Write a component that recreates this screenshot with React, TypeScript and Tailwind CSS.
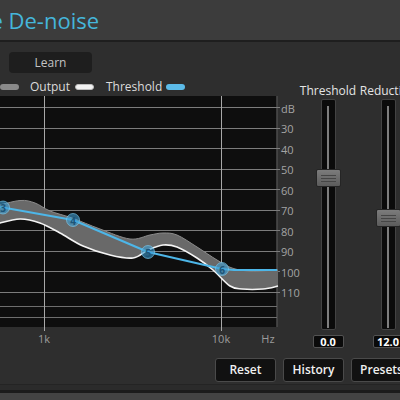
import React from "react";

type Pt = [number, number];

// catmull-rom -> cubic bezier segments
function curve(pts: Pt[], move = true) {
  let d = move ? `M${pts[0][0]},${pts[0][1]}` : `L${pts[0][0]},${pts[0][1]}`;
  for (let i = 0; i < pts.length - 1; i++) {
    const p0 = pts[i - 1] || pts[i];
    const p1 = pts[i];
    const p2 = pts[i + 1];
    const p3 = pts[i + 2] || p2;
    const c1: Pt = [p1[0] + (p2[0] - p0[0]) / 6, p1[1] + (p2[1] - p0[1]) / 6];
    const c2: Pt = [p2[0] - (p3[0] - p1[0]) / 6, p2[1] - (p3[1] - p1[1]) / 6];
    d += ` C${c1[0]},${c1[1]} ${c2[0]},${c2[1]} ${p2[0]},${p2[1]}`;
  }
  return d;
}

const upper: Pt[] = [[-4, 206], [20, 200.5], [35, 203], [50, 211], [72, 218], [100, 229], [130, 239], [150, 235], [163, 233], [177, 235], [197, 247], [217, 260], [232, 268], [250, 271], [278, 270]];
const lower: Pt[] = [[-4, 224], [20, 219], [40, 223], [60, 233], [83, 246], [110, 255], [133, 258], [148, 250], [163, 245], [177, 247], [197, 258], [213, 270], [230, 286], [242, 289], [263, 289], [278, 286]];

const dbLines = [
  { y: 107, label: "dB" },
  { y: 127.5, label: "30" },
  { y: 148, label: "40" },
  { y: 168.5, label: "50" },
  { y: 189, label: "60" },
  { y: 209.5, label: "70" },
  { y: 230, label: "80" },
  { y: 250.5, label: "90" },
  { y: 271, label: "100" },
  { y: 291.5, label: "110" },
];

const nodes = [
  { n: "3", x: 3, y: 207.5 },
  { n: "4", x: 73, y: 220 },
  { n: "5", x: 148, y: 252 },
  { n: "6", x: 222, y: 269 },
];

function Chart() {
  const font = "'Open Sans', sans-serif";
  return (
    <svg width={300} height={252} viewBox="0 96 300 252" className="block">
      <rect x={-2} y={96} width={278.5} height={231} fill="#0e0e0e" />
      <line x1={277} y1={96} x2={277} y2={327} stroke="#5a5a5a" />
      {dbLines.map((l) => (
        <g key={l.label}>
          <line x1={0} y1={Math.round(l.y) + 0.5} x2={280} y2={Math.round(l.y) + 0.5} stroke="#7c7c7c" />
          <text x={281} y={l.y + 1} fontSize={11} fill="#a4a4a4" dominantBaseline="central" fontFamily={font}>
            {l.label}
          </text>
        </g>
      ))}
      <line x1={0} y1={306.5} x2={277} y2={306.5} stroke="#6e6e6e" />
      <line x1={0} y1={317.5} x2={277} y2={317.5} stroke="#6e6e6e" />
      <line x1={44.5} y1={94} x2={44.5} y2={331} stroke="#a8a8a8" />
      <line x1={221.5} y1={94} x2={221.5} y2={331} stroke="#a8a8a8" />

      <path d={curve(upper) + " " + curve([...lower].reverse(), false) + " Z"} fill="#696969" />
      <path d={curve(upper)} fill="none" stroke="#8c8c8c" strokeWidth={1} />
      <path d={curve(lower)} fill="none" stroke="#f4f4f4" strokeWidth={1.6} />

      <polyline
        points="-2,207 3,207.5 73,220 148,252 222,269 234,270 277,270"
        fill="none"
        stroke="#4db6e8"
        strokeWidth={2}
        strokeLinejoin="round"
      />
      {nodes.map((p) => (
        <g key={p.n}>
          <circle cx={p.x} cy={p.y} r={6.5} fill="#3d9fd4" fillOpacity={0.6} stroke="#7fd0f5" strokeOpacity={0.6} />
          <text x={p.x} y={p.y + 0.5} fontSize={10} fontWeight={700} fill="#1c5578" textAnchor="middle" dominantBaseline="central" fontFamily={font}>
            {p.n}
          </text>
        </g>
      ))}

      <text x={44} y={338} fontSize={11} fill="#9c9c9c" textAnchor="middle" dominantBaseline="central" fontFamily={font}>1k</text>
      <text x={221} y={338} fontSize={11} fill="#9c9c9c" textAnchor="middle" dominantBaseline="central" fontFamily={font}>10k</text>
      <text x={268} y={338} fontSize={11} fill="#9c9c9c" textAnchor="middle" dominantBaseline="central" fontFamily={font}>Hz</text>
    </svg>
  );
}

function Slider({ label, value, thumbTop }: { label: string; value: string; thumbTop: number }) {
  return (
    <div className="flex flex-col items-center w-[56px]">
      <div className="h-[14px] text-[12px] leading-[14px] text-[#e4e4e4] whitespace-nowrap">{label}</div>
      <div className="relative mt-[1px] h-[231px] w-[15px] rounded-[2px] border border-[#434343] bg-[#0b0b0b]">
        <div className="mx-auto mt-[6px] h-[222px] w-[2px] bg-[#7e7e7e]" />
        <div
          className="absolute left-[-6px] w-[25px] h-[18px] rounded-[2px] border border-[#252525] bg-gradient-to-b from-[#7c7c7c] to-[#5c5c5c] flex flex-col justify-center gap-[2px] px-[4px]"
          style={{ top: thumbTop }}
        >
          <div className="h-px bg-[#454545]" />
          <div className="h-px bg-[#454545]" />
          <div className="h-px bg-[#454545]" />
        </div>
      </div>
      <div className="mt-[5px] h-[13px] w-[31px] rounded-[2px] border border-[#525252] bg-[#0a0a0a] text-center text-[11px] leading-[11px] font-bold text-white">
        {value}
      </div>
    </div>
  );
}

export default function App() {
  return (
    <div className="w-[400px] h-[400px] overflow-hidden bg-[#2e2e2e] flex flex-col font-['Open_Sans',sans-serif]">
      <div className="h-[40px] shrink-0 bg-[#3c3c3c] pt-[5px] whitespace-nowrap">
        <span className="ml-[-52px] text-[22px] leading-[30px] text-[#45b6db]">Voice De-noise</span>
      </div>
      <div className="h-[2px] shrink-0 bg-[#1e1e1e]" />

      <div className="flex shrink-0">
        <div className="w-[300px] shrink-0">
          <div className="ml-[9px] mt-[10px] h-[21px] w-[83px] rounded-[4px] bg-[#1e1e1e] flex items-center justify-center text-[12px] text-[#c4c4c4]">
            Learn
          </div>
          <div className="mt-[7px] h-[14px] flex items-center text-[12px] leading-[14px] text-[#dcdcdc] whitespace-nowrap">
            <span className="w-[19px] h-[6px] rounded-full bg-[#8a8a8a]" />
            <span className="ml-[11px]">Output</span>
            <span className="ml-[5px] w-[19px] h-[6px] rounded-full bg-[#f2f2f2] border border-[#bdbdbd]" />
            <span className="ml-[12px]">Threshold</span>
            <span className="ml-[4px] w-[19px] h-[6px] rounded-full bg-[#5cbbe8]" />
          </div>
          <div className="mt-[2px]">
            <Chart />
          </div>
        </div>
        <div className="flex gap-[4px] mt-[42px] shrink-0">
          <Slider label="Threshold" value="0.0" thumbTop={69} />
          <Slider label="Reduction" value="12.0" thumbTop={109} />
        </div>
      </div>

      <div className="mt-[10px] ml-[215px] flex gap-[7px] shrink-0">
        {["Reset", "History", "Presets"].map((b) => (
          <div
            key={b}
            className="h-[24px] w-[61px] shrink-0 rounded-[3px] border border-[#4a4a4a] bg-[#111111] flex items-center justify-center text-[12px] font-semibold text-[#f0f0f0]"
          >
            {b}
          </div>
        ))}
      </div>

      <div className="mt-[2px] h-[6px] shrink-0 border-t border-[#242424] bg-[#2b2b2b]" />
      <div className="h-[3px] shrink-0 bg-[#1b1b1b]" />
      <div className="flex-1 bg-[#434343]" />
    </div>
  );
}
